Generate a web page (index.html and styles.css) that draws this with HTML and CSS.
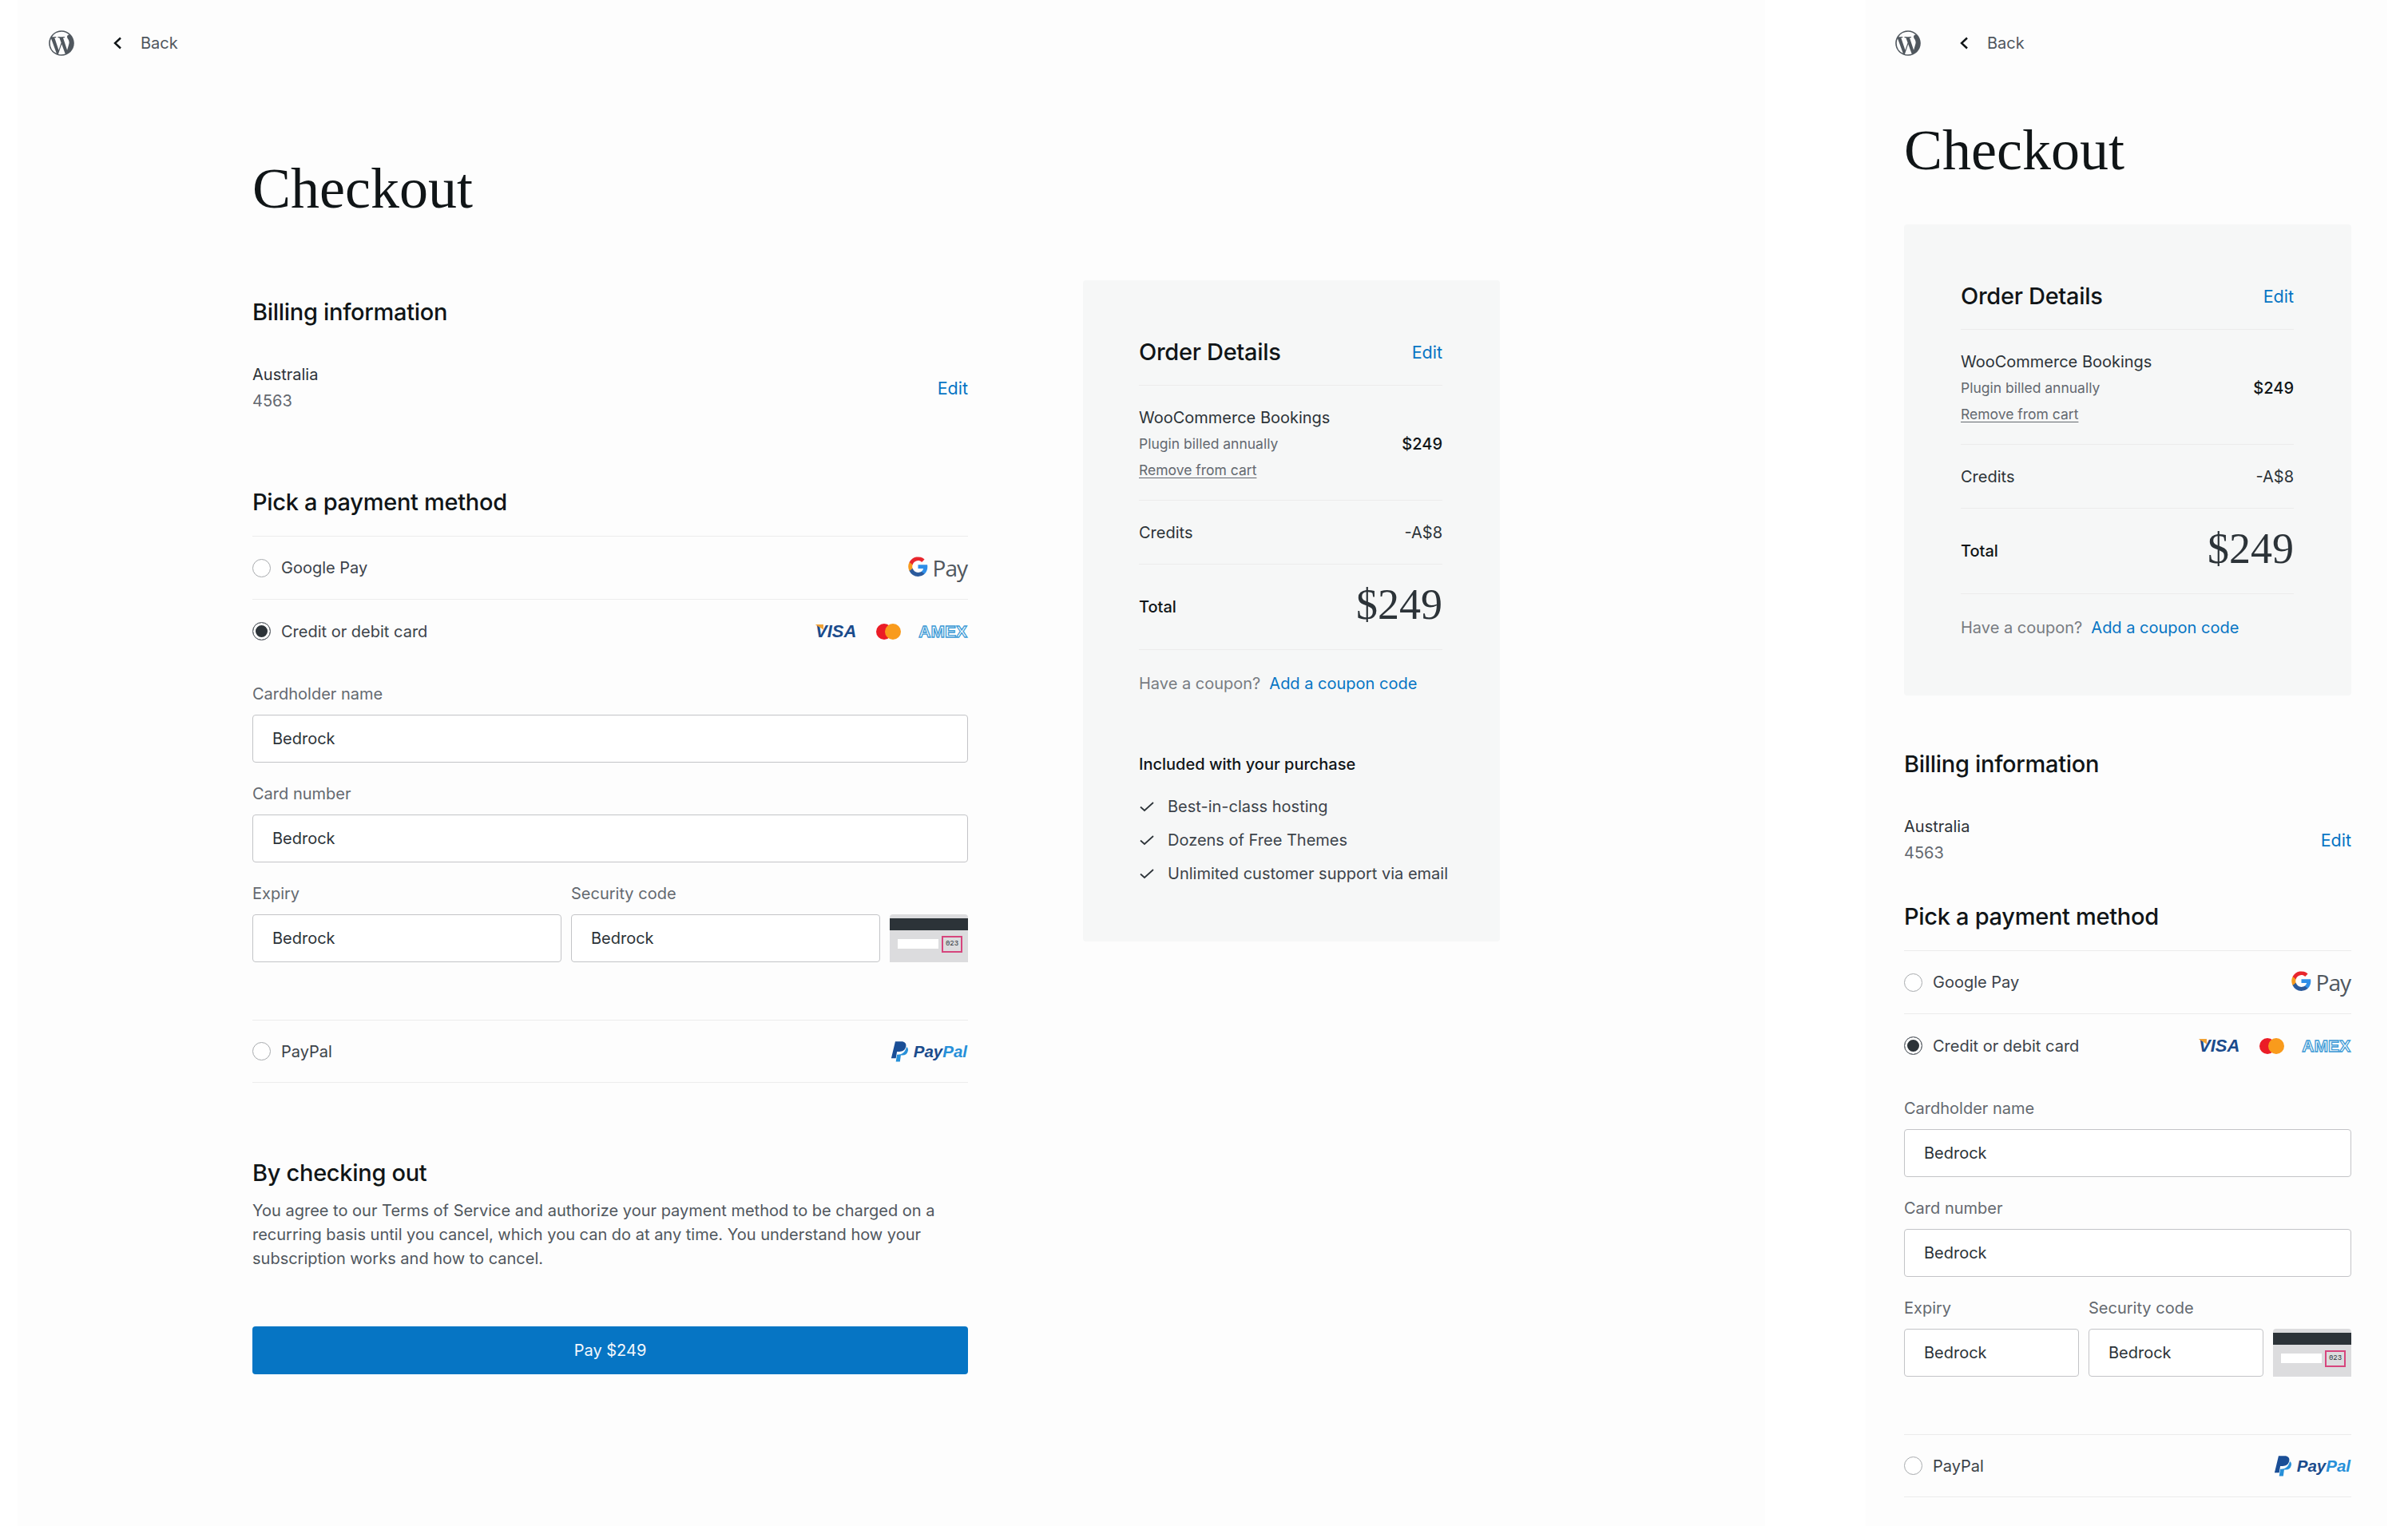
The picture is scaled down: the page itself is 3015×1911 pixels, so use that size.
FILE: index.html
```html
<!DOCTYPE html>
<html lang="en">
<head>
<meta charset="utf-8">
<title>Checkout</title>
<link rel="stylesheet" href="styles.css">
</head>
<body>
<svg class="sprites" width="0" height="0" aria-hidden="true">
  <symbol id="wp" viewBox="0 0 24 24"><path d="M12 2C6.49 2 2 6.49 2 12s4.49 10 10 10 10-4.49 10-10S17.51 2 12 2zM3.01 12c0-1.3.28-2.54.78-3.66l4.29 11.75A8.99 8.99 0 0 1 3.01 12zM12 20.99c-.88 0-1.73-.13-2.54-.37l2.7-7.84 2.76 7.57c.02.04.04.08.06.12-.93.33-1.93.52-2.98.52zm1.24-13.21c.54-.03 1.03-.09 1.03-.09.48-.06.43-.77-.05-.74 0 0-1.46.11-2.4.11-.88 0-2.37-.11-2.37-.11-.48-.03-.54.71-.06.74 0 0 .46.06.94.09l1.4 3.84-1.97 5.9-3.27-9.74c.54-.03 1.03-.09 1.03-.09.48-.06.43-.77-.05-.74 0 0-1.46.11-2.4.11-.17 0-.37 0-.58-.01A8.98 8.98 0 0 1 12 3.01c2.34 0 4.47.89 6.07 2.36-.04 0-.08-.01-.12-.01-.88 0-1.51.77-1.51 1.6 0 .74.43 1.37.88 2.11.34.6.74 1.37.74 2.48 0 .77-.3 1.66-.68 2.91l-.9 3-3.24-9.68zm3.28 12c2.69-1.57 4.49-4.48 4.49-7.79 0-1.56-.4-3.03-1.1-4.31.04.29.06.6.06.93 0 .92-.17 1.95-.69 3.24l-2.76 7.93z"/></symbol>
  <symbol id="chev" viewBox="0 0 16 16"><path d="M12 1.500 5 8l7 6.500" fill="none" stroke="currentColor" stroke-width="2.400"/></symbol>
  <symbol id="check" viewBox="0 0 20 16"><path d="M2 8.500 7 13 18 3" fill="none" stroke="currentColor" stroke-width="1.700"/></symbol>
  <symbol id="gicon" viewBox="0 0 24 24">
    <path d="M22.500 12.300c0-.8-.1-1.500-.2-2.200H12v4.200h5.900a5 5 0 0 1-2.200 3.300v2.700h3.500c2.100-1.900 3.300-4.700 3.300-8z" fill="#2f8ee8"/>
    <path d="M12 23c3 0 5.400-1 7.200-2.700l-3.500-2.700c-1 .7-2.200 1-3.700 1-2.800 0-5.200-1.900-6.100-4.500H2.300v2.800A11 11 0 0 0 12 23z" fill="#2b5a9c"/>
    <path d="M5.900 14.100a6.600 6.600 0 0 1 0-4.200V7.100H2.300a11 11 0 0 0 0 9.800z" fill="#f79a1e"/>
    <path d="M12 5.400c1.600 0 3 .6 4.100 1.600l3.100-3.100A11 11 0 0 0 2.300 7.100l3.600 2.800C6.800 7.300 9.200 5.400 12 5.400z" fill="#e8262d"/>
  </symbol>
  <symbol id="ppicon" viewBox="0 0 24 28">
    <path d="M6.500 0h8.300c4.500 0 7 2.500 6.300 6.700-.9 5-4.400 7.300-9 7.300H8.800L7.300 23H1z" fill="#1a4e96"/>
    <path d="M21.800 7.500c2 1.200 2.500 3.200 2 5.500-.8 4-3.700 6-7.500 6h-2.200l-1.200 8.500H7.300L8.800 18l1 .1c5.500 0 10.300-3 12-10.600z" fill="#2790d9"/>
  </symbol>
</svg>

<main class="stage">
  <section class="frame frame-wide">
    <header class="topbar">
      <svg class="wp-logo"><use href="#wp"/></svg>
      <a class="back"><svg class="chev"><use href="#chev"/></svg><span>Back</span></a>
    </header>
    <div class="wide-columns">
      <div class="col-main">
        <h1 class="title">Checkout</h1>
        <div class="section billing-wide">
          <h2 class="h2">Billing information</h2>
          <div class="billing-row">
            <div><div class="billing-country">Australia</div><div class="billing-code">4563</div></div>
            <a class="link edit">Edit</a>
          </div>
        </div>
        <div class="section pay-wide">
          <h2 class="h2 pay-h">Pick a payment method</h2>
          <div class="method">
            <span class="radio"></span><span class="method-name">Google Pay</span>
            <span class="method-logo"><svg class="gicon"><use href="#gicon"/></svg><span class="gpay">Pay</span></span>
          </div>
          <div class="method method-open">
            <span class="radio radio-on"></span><span class="method-name">Credit or debit card</span>
            <span class="method-logo cards"><span class="visa">VISA</span><span class="mc"><i class="mc-r"></i><i class="mc-o"></i></span><span class="amex">AMEX</span></span>
          </div>
          <div class="form">
            <label class="field"><span class="label">Cardholder name</span><span class="input">Bedrock</span></label>
            <label class="field"><span class="label">Card number</span><span class="input">Bedrock</span></label>
            <div class="field-row">
              <label class="field"><span class="label">Expiry</span><span class="input">Bedrock</span></label>
              <label class="field"><span class="label">Security code</span><span class="input">Bedrock</span></label>
              <div class="cvv"><i class="cvv-strip"></i><i class="cvv-sign"></i><b class="cvv-code">023</b></div>
            </div>
          </div>
          <div class="method method-last">
            <span class="radio"></span><span class="method-name">PayPal</span>
            <span class="method-logo"><svg class="ppicon"><use href="#ppicon"/></svg><span class="pp"><b class="pp-a">Pay</b><b class="pp-b">Pal</b></span></span>
          </div>
        </div>
        <div class="section terms">
          <h2 class="h2">By checking out</h2>
          <p class="terms-text">You agree to our Terms of Service and authorize your payment method to be charged on a recurring basis until you cancel, which you can do at any time. You understand how your subscription works and how to cancel.</p>
          <button class="pay-btn">Pay $249</button>
        </div>
      </div>
      <aside class="order order-wide">
        <div class="order-head"><h2 class="h2">Order Details</h2><a class="link edit">Edit</a></div>
        <div class="order-item">
          <div><div class="item-name">WooCommerce Bookings</div><div class="item-sub">Plugin billed annually</div><a class="item-remove">Remove from cart</a></div>
          <div class="item-price">$249</div>
        </div>
        <div class="order-credits"><span>Credits</span><span>-A$8</span></div>
        <div class="order-total"><span class="total-label">Total</span><span class="total-price">$249</span></div>
        <div class="coupon"><span>Have a coupon?</span><a class="link">Add a coupon code</a></div>
        <div class="included">
          <h3 class="included-h">Included with your purchase</h3>
          <ul class="checks">
            <li><svg class="check"><use href="#check"/></svg>Best-in-class hosting</li>
            <li><svg class="check"><use href="#check"/></svg>Dozens of Free Themes</li>
            <li><svg class="check"><use href="#check"/></svg>Unlimited customer support via email</li>
          </ul>
        </div>
      </aside>
    </div>
  </section>

  <section class="frame frame-narrow">
    <header class="topbar">
      <svg class="wp-logo"><use href="#wp"/></svg>
      <a class="back"><svg class="chev"><use href="#chev"/></svg><span>Back</span></a>
    </header>
    <h1 class="title title-narrow">Checkout</h1>
    <aside class="order order-narrow">
      <div class="order-head"><h2 class="h2">Order Details</h2><a class="link edit">Edit</a></div>
      <div class="order-item">
        <div><div class="item-name">WooCommerce Bookings</div><div class="item-sub">Plugin billed annually</div><a class="item-remove">Remove from cart</a></div>
        <div class="item-price">$249</div>
      </div>
      <div class="order-credits"><span>Credits</span><span>-A$8</span></div>
      <div class="order-total"><span class="total-label">Total</span><span class="total-price">$249</span></div>
      <div class="coupon"><span>Have a coupon?</span><a class="link">Add a coupon code</a></div>
    </aside>
    <div class="section billing-narrow">
      <h2 class="h2">Billing information</h2>
      <div class="billing-row">
        <div><div class="billing-country">Australia</div><div class="billing-code">4563</div></div>
        <a class="link edit">Edit</a>
      </div>
    </div>
    <div class="section pay-narrow">
      <h2 class="h2 pay-h">Pick a payment method</h2>
      <div class="method">
        <span class="radio"></span><span class="method-name">Google Pay</span>
        <span class="method-logo"><svg class="gicon"><use href="#gicon"/></svg><span class="gpay">Pay</span></span>
      </div>
      <div class="method method-open">
        <span class="radio radio-on"></span><span class="method-name">Credit or debit card</span>
        <span class="method-logo cards"><span class="visa">VISA</span><span class="mc"><i class="mc-r"></i><i class="mc-o"></i></span><span class="amex">AMEX</span></span>
      </div>
      <div class="form">
        <label class="field"><span class="label">Cardholder name</span><span class="input">Bedrock</span></label>
        <label class="field"><span class="label">Card number</span><span class="input">Bedrock</span></label>
        <div class="field-row">
          <label class="field"><span class="label">Expiry</span><span class="input">Bedrock</span></label>
          <label class="field"><span class="label">Security code</span><span class="input">Bedrock</span></label>
          <div class="cvv"><i class="cvv-strip"></i><i class="cvv-sign"></i><b class="cvv-code">023</b></div>
        </div>
      </div>
      <div class="method method-last">
        <span class="radio"></span><span class="method-name">PayPal</span>
        <span class="method-logo"><svg class="ppicon"><use href="#ppicon"/></svg><span class="pp"><b class="pp-a">Pay</b><b class="pp-b">Pal</b></span></span>
      </div>
    </div>
  </section>
</main>
</body>
</html>
```
FILE: styles.css
```css
* { box-sizing: border-box; }
html, body { margin: 0; padding: 0; background: #fff; }
body { width: 3015px; height: 1911px; overflow: hidden; font-family: Inter, "Liberation Sans", sans-serif; color: #101517; }
.sprites { position: absolute; }
a { text-decoration: none; }
.stage { display: flex; height: 1911px; padding-left: 22px; gap: 126px; }
.frame { background: #fdfdfd; height: 100%; }
.frame-wide { width: 2188px; padding-left: 36px; }
.frame-narrow { width: 653px; padding-left: 48px; }

.topbar { display: flex; align-items: center; padding-top: 27px; height: 81px; }
.frame-narrow .topbar { margin-left: -14px; }
.wp-logo { width: 38px; height: 38px; fill: #50575e; flex: none; }
.back { display: flex; align-items: center; margin-left: 43px; color: #50575e; font-size: 20px; }
.chev { width: 16px; height: 16px; color: #101517; margin-right: 21px; }

.wide-columns { display: flex; padding-left: 258px; gap: 144px; align-items: flex-start; }
.col-main { width: 896px; flex: none; }
.title { margin: 0; font-family: "Liberation Serif", serif; font-weight: 400; font-size: 72px; line-height: 80px; color: #101517; }
.col-main .title { margin-top: 115px; }
.title-narrow { margin: 67px 0 0; }
.h2 { margin: 0; font-size: 29px; line-height: 40px; font-weight: 500; color: #101517; letter-spacing: -0.3px; }
.billing-wide { margin-top: 95px; }
.billing-row { display: flex; justify-content: space-between; align-items: center; margin-top: 42px; }
.billing-country { font-size: 20px; line-height: 33px; color: #2c3338; }
.billing-code { font-size: 20px; line-height: 33px; color: #646970; }
.link { color: #0675c4; font-size: 20px; }
.edit { font-size: 21.5px; }
.pay-wide { margin-top: 90px; }
.pay-h { padding-bottom: 22px; border-bottom: 1px solid #ececec; }
.method { display: flex; align-items: center; height: 79px; border-bottom: 1px solid #ececec; }
.method-open { border-bottom: 0; }
.method-last { border-top: 1px solid #ececec; margin-top: 47px; }
.radio { width: 23px; height: 23px; border: 1.5px solid #a7aaad; border-radius: 50%; background: #fff; margin-right: 13px; flex: none; }
.radio-on { border-color: #646970; background: #2c3338; box-shadow: inset 0 0 0 3px #fff; }
.method-name { font-size: 20px; color: #3c434a; }
.method-logo { margin-left: auto; display: flex; align-items: center; }
.gicon { width: 27px; height: 27px; margin-right: 5px; margin-top: -3px; }
.gpay { font-size: 28px; color: #50575e; line-height: 34px; font-family: "Open Sans", sans-serif; letter-spacing: -1px; margin-right: 1px; }
.cards { gap: 22px; }
.visa { position: relative; margin-right: 3px; font-family: "Liberation Sans", sans-serif; font-weight: 700; font-style: italic; font-size: 22px; color: #1a4b8c; }
.visa::before { content: ""; position: absolute; left: -1px; top: 4px; width: 11px; height: 7px; background: #f0a236; clip-path: polygon(0 0, 100% 0, 100% 100%); }
.mc { display: flex; width: 31px; height: 20px; }
.mc-r, .mc-o { width: 20px; height: 20px; border-radius: 50%; display: block; }
.mc-r { background: #eb1c26; }
.mc-o { background: #f99b1c; margin-left: -9px; }
.amex { font-family: "Liberation Sans", sans-serif; font-weight: 700; font-size: 21px; line-height: 16px; color: #fff; -webkit-text-stroke: 1.3px #3d9bd6; margin-right: 1px; }

.form { padding-top: 25px; }
.field { display: block; margin-bottom: 25px; min-width: 0; }
.label { display: block; font-size: 20px; line-height: 28px; color: #646970; margin-bottom: 12px; }
.input { display: block; height: 60px; line-height: 58px; padding-left: 24px; font-size: 20px; color: #2c3338; background: #fff; border: 1.5px solid #c3c4c7; border-radius: 4px; }
.field-row { display: grid; grid-template-columns: 1fr 1fr 98px; gap: 12px; }
.cvv { position: relative; height: 60px; margin-top: 40px; background: #dcdcde; border-radius: 4px 4px 0 0; overflow: hidden; }
.cvv-strip { position: absolute; left: 0; right: 0; top: 5px; height: 15px; background: #2c3338; }
.cvv-sign { position: absolute; left: 10px; top: 31px; width: 51px; height: 12px; background: #fff; }
.cvv-code { position: absolute; left: 65px; top: 27px; width: 26px; height: 21px; border: 2px solid #d6457d; font-family: "Liberation Mono", monospace; font-weight: 400; font-size: 9px; line-height: 17px; text-align: center; color: #2c3338; }
.pp { font-family: "Liberation Sans", sans-serif; font-size: 20.5px; font-style: italic; margin-right: 1px; }
.ppicon { width: 22px; height: 26px; margin-right: 7px; }
.pp-a { color: #1a4b8c; }
.pp-b { color: #2790d9; }

.terms { margin-top: 93px; }
.terms-text { margin: 12px 0 0; font-size: 20px; line-height: 30px; color: #50575e; }
.pay-btn { display: block; width: 100%; height: 60px; margin-top: 70px; background: #0675c4; color: #f3f8fc; border: 0; border-radius: 4px; font: 400 20px Inter, sans-serif; }

.order { background: #f6f7f7; border-radius: 4px; flex: none; }
.order-wide { width: 522px; height: 828px; margin-top: 270px; padding: 70px 72px 0 70px; }
.order-narrow { width: 560px; height: 590px; margin: 53px 0 0; padding: 70px 72px 0 71px; }
.order-head { display: flex; justify-content: space-between; align-items: center; padding-bottom: 21px; border-bottom: 1px solid #ececec; }
.order-item { display: flex; justify-content: space-between; align-items: center; padding: 23px 0 20px; border-bottom: 1px solid #ececec; }
.item-name { font-size: 20px; line-height: 34px; color: #2c3338; }
.item-sub, .item-remove { font-size: 17.5px; line-height: 32px; color: #646970; display: block; }
.item-remove { text-decoration: underline; text-underline-offset: 3px; line-height: 34px; }
.item-price { font-size: 20px; font-weight: 500; }
.order-credits { display: flex; justify-content: space-between; font-size: 20px; line-height: 28px; padding: 26px 0 25px; border-bottom: 1px solid #ececec; color: #2c3338; }
.order-total { display: flex; justify-content: space-between; align-items: center; height: 107px; border-bottom: 1px solid #ececec; }
.total-label { font-size: 20px; font-weight: 500; }
.total-price { font-family: "Liberation Serif", serif; font-size: 54px; color: #2c3338; margin-top: -6px; }
.coupon { display: flex; gap: 11px; margin-top: 28px; font-size: 20px; line-height: 28px; color: #787c82; }
.included { margin-top: 73px; }
.included-h { margin: 0 0 18px; font-size: 20px; line-height: 28px; font-weight: 500; color: #101517; }
.checks { list-style: none; margin: 0; padding: 0; white-space: nowrap; }
.checks li { display: flex; align-items: center; font-size: 20px; line-height: 42px; color: #3c434a; }
.check { flex: none; width: 20px; height: 16px; margin: 0 16px 0 0; color: #2c3338; }

.billing-narrow { margin: 66px 0 0; width: 560px; }
.pay-narrow { margin: 43px 0 0; width: 560px; }
```
